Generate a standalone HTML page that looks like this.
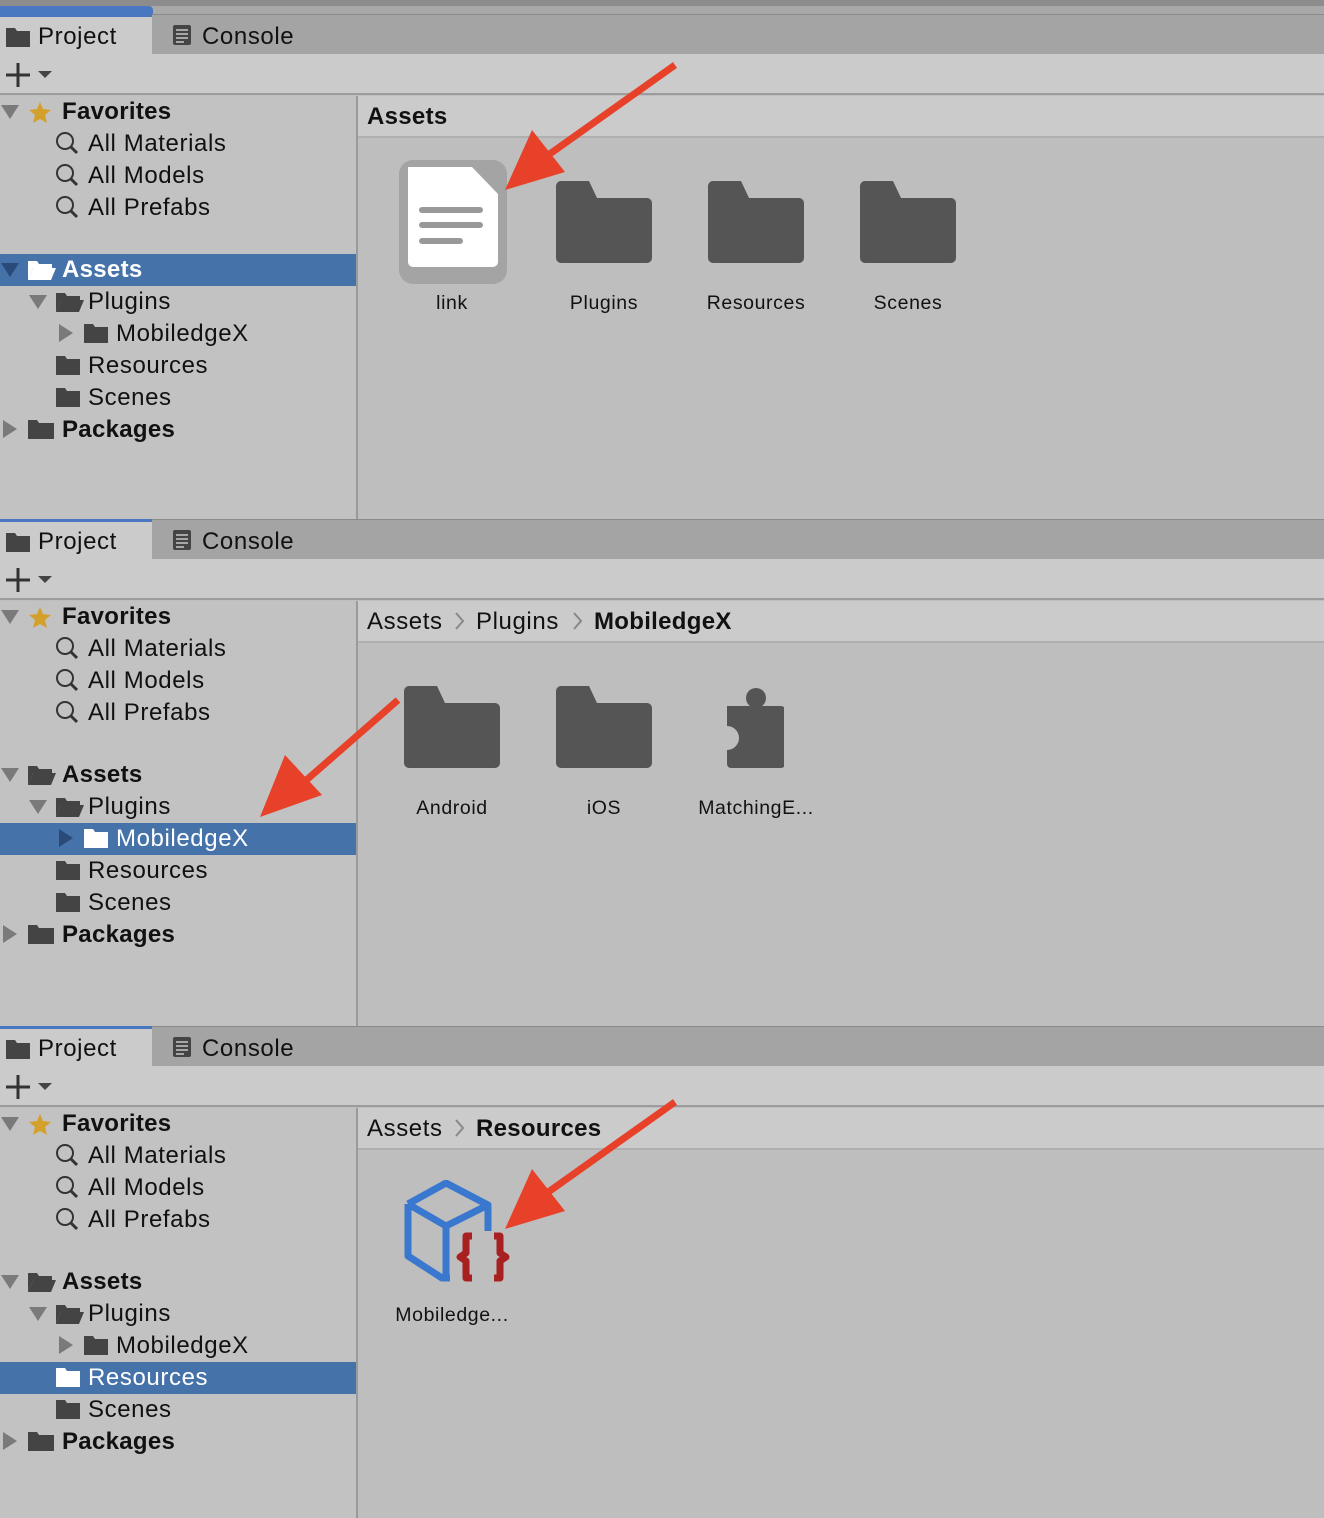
<!DOCTYPE html>
<html><head><meta charset="utf-8"><style>
*{margin:0;padding:0;box-sizing:border-box}
body{width:1324px;height:1518px;background:#bebebe;font-family:"Liberation Sans",sans-serif;position:relative;overflow:hidden;color:#111}
.p{position:absolute;left:0;width:1324px;overflow:hidden;background:#bebebe}
.a{position:absolute}
.tabbar{left:0;top:14px;width:1324px;height:40px;background:#a4a4a4;border-top:1px solid #8a8a8a}
.tab{left:0;top:14px;width:152px;height:41px;background:#cbcbcb;border-top:3px solid #4a78c0}
.tool{left:0;top:54px;width:1324px;height:41px;background:#cbcbcb;border-bottom:2px solid #9c9c9c}
.tree{left:0;top:96px;width:358px;height:430px;background:#c2c2c2;border-right:2px solid #9a9a9a}
.hdr{left:358px;top:96px;width:966px;height:42px;background:#cbcbcb;border-bottom:2px solid #b0b0b0}
.t{position:absolute;font-size:24px;line-height:32px;white-space:nowrap;letter-spacing:0.6px;top:1px}
.b{font-weight:bold;letter-spacing:0.3px}
.sel{position:absolute;left:0;width:356px;height:32px;background:#4672aa}
.lbl{position:absolute;font-size:19.5px;width:152px;text-align:center;line-height:24px;letter-spacing:0.6px}
.w{color:#fff}
.strip{left:0;top:0;width:356px;height:14px;background:#c2c2c2}
</style></head><body>

<!-- PANEL 1 -->
<div class="p" style="top:0;height:519px">
<div class="a" style="left:0;top:0;width:1324px;height:6px;background:#8c8c8c"></div>
<div class="a" style="left:0;top:6px;width:1324px;height:9px;background:#a8a8a8"></div>
<div class="a" style="left:0;top:6px;width:153px;height:8px;background:#4a78c0;border-radius:0 4px 0 0"></div>
<div class="a tabbar"></div><div class="a tab"></div>
<svg class="a" style="left:6px;top:26px" width="26" height="22"><path d="M0 2h9l2 3h13v16H0z" fill="#444"/></svg>
<div class="t" style="left:38px;top:21px">Project</div>
<svg class="a" style="left:172px;top:24px" width="20" height="22"><rect x="1" y="1" width="18" height="20" rx="2" fill="#444"/><path d="M4 6h12M4 10h12M4 14h12M4 18h8" stroke="#c8c8c8" stroke-width="1.5"/></svg>
<div class="t" style="left:202px;top:21px">Console</div>
<div class="a tool"></div>
<svg class="a" style="left:4px;top:60px" width="52" height="28"><path d="M14 3v24M2 15h24" stroke="#333" stroke-width="3"/><path d="M34 11h14l-7 7z" fill="#444"/></svg>
<div class="a tree"></div>
<div class="sel" style="top:254px"></div>
<div class="a hdr"></div>
<div class="t b" style="left:367px;top:101px">Assets</div>
<svg class="a" style="left:0;top:101px" width="60" height="22"><path d="M1 4h18l-9 14z" fill="#7a7a7a"/><path d="M40 1l3 7 8 1-6 5 2 8-7-4-7 4 2-8-6-5 8-1z" fill="#d4a02c"/></svg>
<div class="t b" style="left:62px;top:96px">Favorites</div>
<svg class="a" style="left:55px;top:131px" width="26" height="90"><g fill="none" stroke="#333" stroke-width="2"><circle cx="10" cy="10" r="8"/><path d="M16 16l6 6" stroke-width="3"/><circle cx="10" cy="42" r="8"/><path d="M16 48l6 6" stroke-width="3"/><circle cx="10" cy="74" r="8"/><path d="M16 80l6 6" stroke-width="3"/></g></svg>
<div class="t" style="left:88px;top:128px">All Materials</div>
<div class="t" style="left:88px;top:160px">All Models</div>
<div class="t" style="left:88px;top:192px">All Prefabs</div>
<svg class="a" style="left:0;top:258px" width="60" height="24"><path d="M1 5h18l-9 14z" fill="#2a4a7a"/><path d="M28 3h9l2 3h13v4H33l-5 12z" fill="#fff"/><path d="M33 10h23l-5 12H28z" fill="#fff"/></svg>
<div class="t b w" style="left:62px;top:254px">Assets</div>
<svg class="a" style="left:28px;top:290px" width="60" height="24"><path d="M1 5h18l-9 14z" fill="#7a7a7a"/><path d="M28 3h9l2 3h13v4H33l-5 12z" fill="#444"/><path d="M33 10h23l-5 12H28z" fill="#444"/></svg>
<div class="t" style="left:88px;top:286px">Plugins</div>
<svg class="a" style="left:58px;top:322px" width="52" height="24"><path d="M1 2l14 9-14 9z" fill="#7a7a7a"/><path d="M26 2h9l2 3h13v16H26z" fill="#444"/></svg>
<div class="t" style="left:116px;top:318px">MobiledgeX</div>
<svg class="a" style="left:56px;top:354px" width="26" height="60"><path d="M0 2h9l2 3h13v16H0z" fill="#444"/><path d="M0 34h9l2 3h13v16H0z" fill="#444"/></svg>
<div class="t" style="left:88px;top:350px">Resources</div>
<div class="t" style="left:88px;top:382px">Scenes</div>
<svg class="a" style="left:0;top:418px" width="56" height="24"><path d="M3 2l14 9-14 9z" fill="#7a7a7a"/><path d="M28 2h9l2 3h15v16H28z" fill="#444"/></svg>
<div class="t b" style="left:62px;top:414px">Packages</div>
<svg class="a" style="left:396px;top:157px" width="114" height="130"><rect x="3" y="3" width="108" height="124" rx="14" fill="#a4a4a4"/><path d="M12 10h64l26 27v68a5 5 0 0 1-5 5H17a5 5 0 0 1-5-5z" fill="#fff"/><path d="M26 53h58M26 68h58M26 84h38" stroke="#999" stroke-width="6" stroke-linecap="round"/></svg>
<div class="lbl" style="left:376px;top:291px">link</div>
<svg class="a" style="left:556px;top:181px" width="96" height="82"><path d="M0 5a5 5 0 0 1 5-5h28l8 17h50a5 5 0 0 1 5 5v55a5 5 0 0 1-5 5H5a5 5 0 0 1-5-5z" fill="#555"/></svg>
<div class="lbl" style="left:528px;top:291px">Plugins</div>
<svg class="a" style="left:708px;top:181px" width="96" height="82"><path d="M0 5a5 5 0 0 1 5-5h28l8 17h50a5 5 0 0 1 5 5v55a5 5 0 0 1-5 5H5a5 5 0 0 1-5-5z" fill="#555"/></svg>
<div class="lbl" style="left:680px;top:291px">Resources</div>
<svg class="a" style="left:860px;top:181px" width="96" height="82"><path d="M0 5a5 5 0 0 1 5-5h28l8 17h50a5 5 0 0 1 5 5v55a5 5 0 0 1-5 5H5a5 5 0 0 1-5-5z" fill="#555"/></svg>
<div class="lbl" style="left:832px;top:291px">Scenes</div>
<svg class="a" style="left:490px;top:55px" width="200" height="150"><path d="M185 10L40 113" stroke="#e8412a" stroke-width="7"/><path d="M15 135l27-60 33 42z" fill="#e8412a"/></svg>
</div>

<!-- PANEL 2 -->
<div class="p" style="top:505px;height:521px">
<div class="a" style="left:0;top:0;width:1324px;height:14px;background:#bebebe"></div>
<div class="a strip"></div>
<div class="a" style="left:356px;top:0;width:2px;height:14px;background:#9a9a9a"></div>
<div class="a tabbar"></div><div class="a tab"></div>
<svg class="a" style="left:6px;top:26px" width="26" height="22"><path d="M0 2h9l2 3h13v16H0z" fill="#444"/></svg>
<div class="t" style="left:38px;top:21px">Project</div>
<svg class="a" style="left:172px;top:24px" width="20" height="22"><rect x="1" y="1" width="18" height="20" rx="2" fill="#444"/><path d="M4 6h12M4 10h12M4 14h12M4 18h8" stroke="#c8c8c8" stroke-width="1.5"/></svg>
<div class="t" style="left:202px;top:21px">Console</div>
<div class="a tool"></div>
<svg class="a" style="left:4px;top:60px" width="52" height="28"><path d="M14 3v24M2 15h24" stroke="#333" stroke-width="3"/><path d="M34 11h14l-7 7z" fill="#444"/></svg>
<div class="a tree"></div>
<div class="sel" style="top:318px"></div>
<div class="a hdr"></div>
<div class="t" style="left:367px;top:101px">Assets</div>
<svg class="a" style="left:454px;top:106px" width="12" height="20"><path d="M2 2l7 8-7 8" stroke="#888" stroke-width="2" fill="none"/></svg>
<div class="t" style="left:476px;top:101px">Plugins</div>
<svg class="a" style="left:572px;top:106px" width="12" height="20"><path d="M2 2l7 8-7 8" stroke="#888" stroke-width="2" fill="none"/></svg>
<div class="t b" style="left:594px;top:101px">MobiledgeX</div>
<svg class="a" style="left:0;top:101px" width="60" height="22"><path d="M1 4h18l-9 14z" fill="#7a7a7a"/><path d="M40 1l3 7 8 1-6 5 2 8-7-4-7 4 2-8-6-5 8-1z" fill="#d4a02c"/></svg>
<div class="t b" style="left:62px;top:96px">Favorites</div>
<svg class="a" style="left:55px;top:131px" width="26" height="90"><g fill="none" stroke="#333" stroke-width="2"><circle cx="10" cy="10" r="8"/><path d="M16 16l6 6" stroke-width="3"/><circle cx="10" cy="42" r="8"/><path d="M16 48l6 6" stroke-width="3"/><circle cx="10" cy="74" r="8"/><path d="M16 80l6 6" stroke-width="3"/></g></svg>
<div class="t" style="left:88px;top:128px">All Materials</div>
<div class="t" style="left:88px;top:160px">All Models</div>
<div class="t" style="left:88px;top:192px">All Prefabs</div>
<svg class="a" style="left:0;top:258px" width="60" height="24"><path d="M1 5h18l-9 14z" fill="#7a7a7a"/><path d="M28 3h9l2 3h13v4H33l-5 12z" fill="#444"/><path d="M33 10h23l-5 12H28z" fill="#444"/></svg>
<div class="t b" style="left:62px;top:254px">Assets</div>
<svg class="a" style="left:28px;top:290px" width="60" height="24"><path d="M1 5h18l-9 14z" fill="#7a7a7a"/><path d="M28 3h9l2 3h13v4H33l-5 12z" fill="#444"/><path d="M33 10h23l-5 12H28z" fill="#444"/></svg>
<div class="t" style="left:88px;top:286px">Plugins</div>
<svg class="a" style="left:58px;top:322px" width="52" height="24"><path d="M1 2l14 9-14 9z" fill="#2a4a7a"/><path d="M26 2h9l2 3h13v16H26z" fill="#fff"/></svg>
<div class="t w" style="left:116px;top:318px">MobiledgeX</div>
<svg class="a" style="left:56px;top:354px" width="26" height="60"><path d="M0 2h9l2 3h13v16H0z" fill="#444"/><path d="M0 34h9l2 3h13v16H0z" fill="#444"/></svg>
<div class="t" style="left:88px;top:350px">Resources</div>
<div class="t" style="left:88px;top:382px">Scenes</div>
<svg class="a" style="left:0;top:418px" width="56" height="24"><path d="M3 2l14 9-14 9z" fill="#7a7a7a"/><path d="M28 2h9l2 3h15v16H28z" fill="#444"/></svg>
<div class="t b" style="left:62px;top:414px">Packages</div>
<svg class="a" style="left:404px;top:181px" width="96" height="82"><path d="M0 5a5 5 0 0 1 5-5h28l8 17h50a5 5 0 0 1 5 5v55a5 5 0 0 1-5 5H5a5 5 0 0 1-5-5z" fill="#555"/></svg>
<div class="lbl" style="left:376px;top:291px">Android</div>
<svg class="a" style="left:556px;top:181px" width="96" height="82"><path d="M0 5a5 5 0 0 1 5-5h28l8 17h50a5 5 0 0 1 5 5v55a5 5 0 0 1-5 5H5a5 5 0 0 1-5-5z" fill="#555"/></svg>
<div class="lbl" style="left:528px;top:291px">iOS</div>
<svg class="a" style="left:722px;top:181px" width="62" height="84"><circle cx="34" cy="12" r="10" fill="#555"/><path d="M5 20h54a4 4 0 0 1 4 4v54a4 4 0 0 1-4 4H9a4 4 0 0 1-4-4V64a12 12 0 0 0 0-24z" fill="#555"/></svg>
<div class="lbl" style="left:680px;top:291px">MatchingE...</div>
<svg class="a" style="left:250px;top:190px" width="160" height="130"><path d="M148 5L45 95" stroke="#e8412a" stroke-width="7"/><path d="M10 122l25-62 37 40z" fill="#e8412a"/></svg>
</div>

<!-- PANEL 3 -->
<div class="p" style="top:1012px;height:506px">
<div class="a" style="left:0;top:0;width:1324px;height:14px;background:#bebebe"></div>
<div class="a strip"></div>
<div class="a" style="left:356px;top:0;width:2px;height:14px;background:#9a9a9a"></div>
<div class="a tabbar"></div><div class="a tab"></div>
<svg class="a" style="left:6px;top:26px" width="26" height="22"><path d="M0 2h9l2 3h13v16H0z" fill="#444"/></svg>
<div class="t" style="left:38px;top:21px">Project</div>
<svg class="a" style="left:172px;top:24px" width="20" height="22"><rect x="1" y="1" width="18" height="20" rx="2" fill="#444"/><path d="M4 6h12M4 10h12M4 14h12M4 18h8" stroke="#c8c8c8" stroke-width="1.5"/></svg>
<div class="t" style="left:202px;top:21px">Console</div>
<div class="a tool"></div>
<svg class="a" style="left:4px;top:60px" width="52" height="28"><path d="M14 3v24M2 15h24" stroke="#333" stroke-width="3"/><path d="M34 11h14l-7 7z" fill="#444"/></svg>
<div class="a tree"></div>
<div class="sel" style="top:350px"></div>
<div class="a hdr"></div>
<div class="t" style="left:367px;top:101px">Assets</div>
<svg class="a" style="left:454px;top:106px" width="12" height="20"><path d="M2 2l7 8-7 8" stroke="#888" stroke-width="2" fill="none"/></svg>
<div class="t b" style="left:476px;top:101px">Resources</div>
<svg class="a" style="left:0;top:101px" width="60" height="22"><path d="M1 4h18l-9 14z" fill="#7a7a7a"/><path d="M40 1l3 7 8 1-6 5 2 8-7-4-7 4 2-8-6-5 8-1z" fill="#d4a02c"/></svg>
<div class="t b" style="left:62px;top:96px">Favorites</div>
<svg class="a" style="left:55px;top:131px" width="26" height="90"><g fill="none" stroke="#333" stroke-width="2"><circle cx="10" cy="10" r="8"/><path d="M16 16l6 6" stroke-width="3"/><circle cx="10" cy="42" r="8"/><path d="M16 48l6 6" stroke-width="3"/><circle cx="10" cy="74" r="8"/><path d="M16 80l6 6" stroke-width="3"/></g></svg>
<div class="t" style="left:88px;top:128px">All Materials</div>
<div class="t" style="left:88px;top:160px">All Models</div>
<div class="t" style="left:88px;top:192px">All Prefabs</div>
<svg class="a" style="left:0;top:258px" width="60" height="24"><path d="M1 5h18l-9 14z" fill="#7a7a7a"/><path d="M28 3h9l2 3h13v4H33l-5 12z" fill="#444"/><path d="M33 10h23l-5 12H28z" fill="#444"/></svg>
<div class="t b" style="left:62px;top:254px">Assets</div>
<svg class="a" style="left:28px;top:290px" width="60" height="24"><path d="M1 5h18l-9 14z" fill="#7a7a7a"/><path d="M28 3h9l2 3h13v4H33l-5 12z" fill="#444"/><path d="M33 10h23l-5 12H28z" fill="#444"/></svg>
<div class="t" style="left:88px;top:286px">Plugins</div>
<svg class="a" style="left:58px;top:322px" width="52" height="24"><path d="M1 2l14 9-14 9z" fill="#7a7a7a"/><path d="M26 2h9l2 3h13v16H26z" fill="#444"/></svg>
<div class="t" style="left:116px;top:318px">MobiledgeX</div>
<svg class="a" style="left:56px;top:354px" width="26" height="60"><path d="M0 2h9l2 3h13v16H0z" fill="#fff"/><path d="M0 34h9l2 3h13v16H0z" fill="#444"/></svg>
<div class="t w" style="left:88px;top:350px">Resources</div>
<div class="t" style="left:88px;top:382px">Scenes</div>
<svg class="a" style="left:0;top:418px" width="56" height="24"><path d="M3 2l14 9-14 9z" fill="#7a7a7a"/><path d="M28 2h9l2 3h15v16H28z" fill="#444"/></svg>
<div class="t b" style="left:62px;top:414px">Packages</div>
<svg class="a" style="left:400px;top:168px" width="120" height="112"><g fill="none" stroke="#3a78d0" stroke-width="7" stroke-linejoin="round"><path d="M8 24L46 3l42 22v26"/><path d="M8 24l38 22 42-21"/><path d="M46 46v50"/><path d="M8 24v52l34 22h8"/></g><g fill="none" stroke="#a82020" stroke-width="7" stroke-linejoin="round"><path d="M72 56h-6v17l-6 4 6 4v17h6"/><path d="M94 56h6v17l6 4-6 4v17h-6"/></g></svg>
<div class="lbl" style="left:376px;top:291px">Mobiledge...</div>
<svg class="a" style="left:490px;top:85px" width="200" height="150"><path d="M185 5L40 108" stroke="#e8412a" stroke-width="7"/><path d="M15 132l27-60 33 42z" fill="#e8412a"/></svg>
</div>
</body></html>
